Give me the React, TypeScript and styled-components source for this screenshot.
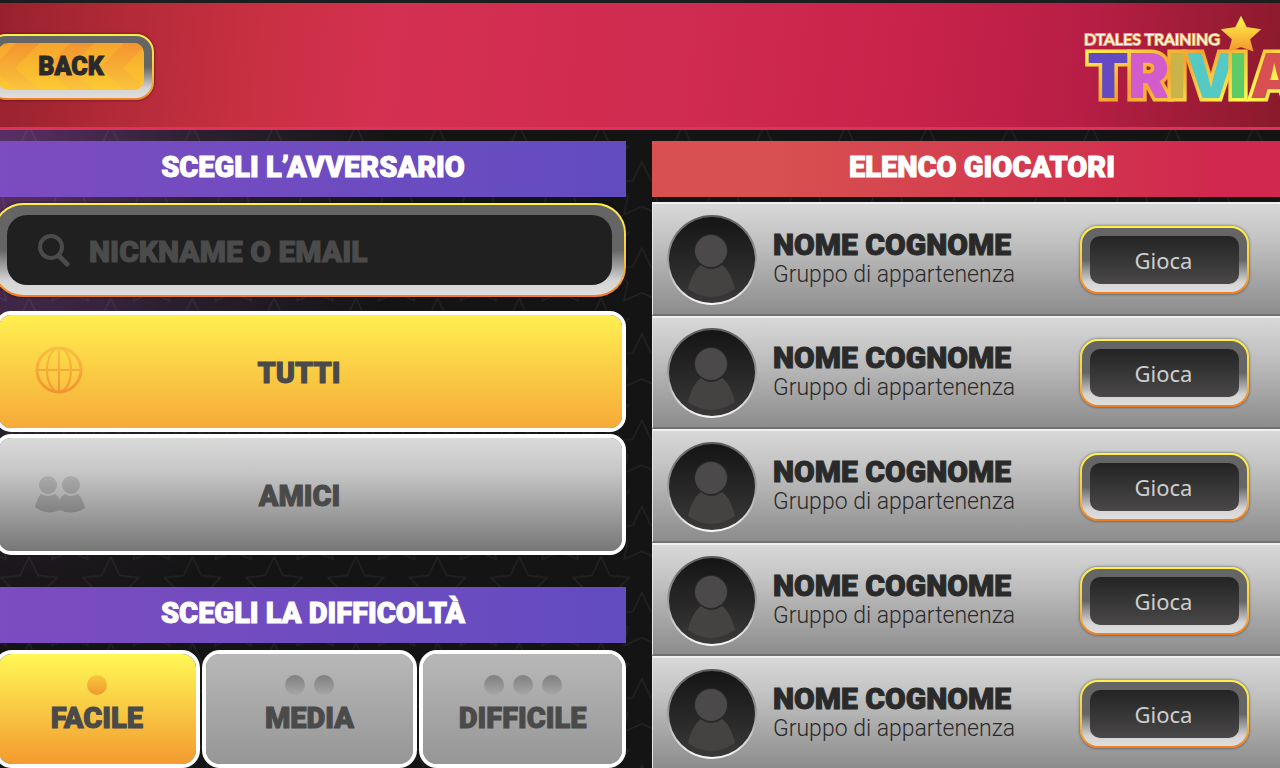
import React from "react";
import styled, { createGlobalStyle, css } from "styled-components";

const GlobalStyle = createGlobalStyle`
  * { box-sizing: border-box; }
  body { margin: 0; background: #141414; font-family: Roboto, "Liberation Sans", sans-serif; }
  button, input { font-family: inherit; }
`;

const displayText = css`
  font-family: Roboto, "Liberation Sans", sans-serif;
  font-weight: 900;
  text-transform: uppercase;
  -webkit-text-stroke: 1px currentColor;
`;

const goldRing = "linear-gradient(#fff04a, #f9c53a 60%, #f07c22)";
const steelRing = "linear-gradient(#656565 0%, #656565 50%, #d4d4d4 84%, #dedede 100%)";

const frame = css`
  border: 2px solid transparent;
  background: ${steelRing} padding-box, ${goldRing} border-box;
  box-shadow: 0 0 3px rgba(0, 0, 0, 0.6);
`;

const Page = styled.div`
  position: relative;
  height: 100vh;
  overflow: hidden;
  background: radial-gradient(ellipse 400px 480px at 0 160px, #5c3068, #2c2030 50%, #141414);
`;

const Stars = styled.svg`
  position: absolute;
  inset: 0;
  width: 100%;
  height: 100%;
`;

const Content = styled.div`
  position: relative;
`;

const Header = styled.header`
  display: flex;
  justify-content: space-between;
  align-items: flex-start;
  height: 130px;
  overflow: hidden;
  border-top: 3px solid #1b1d1f;
  border-bottom: 3px solid #e2305a;
  background: linear-gradient(97deg, #98212e 0%, #b32a38 10%, #c83042 20%, #d43050 30%, #d02b50 52%, #c9234b 70%, #b81e45 84%, #8a1a2c 100%);
`;

const BackButton = styled.button`
  ${frame}
  width: 166px;
  height: 66px;
  margin: 31px 0 0 -12px;
  padding: 7px 8px 8px;
  border-radius: 18px;
  cursor: pointer;
`;

const BackFace = styled.span`
  position: relative;
  display: flex;
  align-items: center;
  justify-content: center;
  height: 100%;
  overflow: hidden;
  border-radius: 10px;
  background: linear-gradient(#f7a52c, #fcca33);
`;

const Chevrons = styled.svg`
  position: absolute;
  inset: 0;
  width: 100%;
  height: 100%;
`;

const BackLabel = styled.span`
  ${displayText}
  position: relative;
  font-size: 25px;
  line-height: 30px;
  color: #2a2a2a;
`;

const Logo = styled.svg`
  flex: none;
  width: 220px;
  height: 100px;
  margin: 7px -20px 0 0;
`;

const Columns = styled.main`
  display: grid;
  grid-template-columns: minmax(0, 626fr) minmax(0, 628fr);
  gap: 26px;
  padding-top: 11px;
`;

const Column = styled.section`
  display: flex;
  flex-direction: column;
`;

const Title = styled.h2<{ $tone: "violet" | "red" }>`
  ${displayText}
  margin: 0;
  font-size: 29px;
  line-height: 52px;
  padding: 0 0 4px ${(p) => (p.$tone === "red" ? 32 : 0)}px;
  text-align: center;
  color: #fff;
  background: ${(p) =>
    p.$tone === "violet"
      ? "linear-gradient(90deg, #7c4cc0, #624cc0)"
      : "linear-gradient(90deg, #d85050 20%, #d0284e 90%)"};
`;

const SearchFrame = styled.label`
  ${frame}
  display: block;
  height: 94px;
  margin: 6px 0 14px -7px;
  padding: 10px 12px;
  border-radius: 30px;
`;

const SearchBox = styled.span`
  display: flex;
  align-items: center;
  gap: 18px;
  height: 70px;
  padding: 2px 30px 0;
  border-radius: 20px;
  background: #202020;
`;

const SearchInput = styled.input`
  ${displayText}
  flex: 1;
  min-width: 0;
  height: 60px;
  padding: 0;
  border: 0;
  outline: 0;
  background: none;
  color: #cfcfcf;
  font-size: 30px;
  &::placeholder { color: #4b4b4b; opacity: 1; }
`;

const Choices = styled.div`
  display: grid;
  gap: 2px;
  margin: 0 0 32px -5px;
`;

const Choice = styled.button<{ $active?: boolean }>`
  display: flex;
  align-items: center;
  height: 121px;
  padding: 0 108px 0 36px;
  border: 4px solid #fff;
  border-radius: 16px;
  cursor: pointer;
  background: ${(p) =>
    p.$active ? "linear-gradient(#ffef50, #f6aa38)" : "linear-gradient(#dadada, #c6c6c6 30%, #777)"} padding-box;
`;

const ChoiceLabel = styled.span`
  ${displayText}
  flex: 1;
  padding-top: 2px;
  font-size: 29px;
  line-height: 36px;
  text-align: center;
  color: #4a4a4a;
`;

const Levels = styled.div`
  display: grid;
  grid-template-columns: 206fr 216fr 207fr;
  gap: 2px;
  margin: 7px 0 0 -6px;
`;

const Level = styled.button<{ $active?: boolean }>`
  display: flex;
  flex-direction: column;
  align-items: center;
  gap: 10px;
  height: 118px;
  padding: 21px 0 0;
  border: 4px solid #fff;
  border-radius: 18px;
  cursor: pointer;
  background: ${(p) =>
    p.$active ? "linear-gradient(#fff856, #f39a30)" : "linear-gradient(#b8b8b8, #969696)"} padding-box;
`;

const Dots = styled.span`
  display: flex;
  gap: 9px;
`;

const Dot = styled.span<{ $active?: boolean }>`
  width: 20px;
  height: 20px;
  border-radius: 50%;
  background: ${(p) => (p.$active ? "linear-gradient(#f8c83c, #f19830)" : "linear-gradient(#808080, #a6a6a6)")};
`;

const LevelLabel = styled.span`
  ${displayText}
  font-size: 29px;
  line-height: 26px;
  color: #4a4a4a;
`;

const Players = styled.ul`
  flex: 1;
  display: grid;
  grid-auto-rows: minmax(0, 1fr);
  list-style: none;
  margin: 5px 0 -2px;
  padding: 0;
`;

const Player = styled.li`
  display: flex;
  align-items: center;
  padding: 2px 31px 0 14px;
  border-top: 2px solid #f0f0f0;
  border-left: 1px solid #e8e8e8;
  border-bottom: 2px solid #707070;
  background: linear-gradient(#d8d8d8, #c4c4c4 30%, #8c8c8c);
`;

const Avatar = styled.svg`
  flex: none;
  width: 92px;
  height: 92px;
  margin-right: 14px;
`;

const Identity = styled.div`
  flex: 1;
  min-width: 0;
  padding-bottom: 2px;
  white-space: nowrap;
  color: #2a2a2a;
`;

const Name = styled.h3`
  ${displayText}
  margin: 0;
  font-size: 30px;
  line-height: 32px;
`;

const Group = styled.p`
  margin: 0;
  font-size: 23px;
  font-weight: 300;
  line-height: 28px;
`;

const PlayButton = styled.button`
  ${frame}
  width: 169px;
  height: 68px;
  padding: 8px;
  border-radius: 18px;
  cursor: pointer;
`;

const PlayFace = styled.span`
  display: block;
  height: 48px;
  padding-right: 2px;
  border-radius: 10px;
  background: linear-gradient(#242424, #4a4848);
  font-family: "Noto Sans", "Liberation Sans", sans-serif;
  font-size: 22px;
  line-height: 48px;
  color: #cdcdcd;
`;

const STAR = "M0 0L9 19L28 21L14 35L18 53L0 45L-18 53L-14 35L-28 21L-9 19Z";

function StarBackground() {
  return (
    <Stars aria-hidden="true">
      <defs>
        <pattern id="stars" x="-11.8" y="125.6" width="81.7" height="86.2" patternUnits="userSpaceOnUse">
          <g fill="none" stroke="#fff" strokeOpacity="0.07" strokeWidth="1.2">
            <path d={STAR} transform="translate(40.85 0)" />
            <path d={STAR} transform="translate(0 36)" />
            <path d={STAR} transform="translate(81.7 36)" />
            <path d={STAR} transform="translate(0 -50.2)" />
            <path d={STAR} transform="translate(81.7 -50.2)" />
          </g>
        </pattern>
      </defs>
      <rect width="100%" height="100%" fill="url(#stars)" />
    </Stars>
  );
}

const LETTERS = [
  { char: "T", x: 7, color: "#644ac2" },
  { char: "R", x: 48, color: "#d25ccb" },
  { char: "I", x: 88, color: "#c9b44a" },
  { char: "V", x: 106, color: "#55cac4" },
  { char: "I", x: 149, color: "#5fcb66" },
  { char: "A", x: 170, color: "#d95052" },
];

function TriviaLogo() {
  return (
    <Logo viewBox="0 0 220 100" role="img" aria-label="DTales Training Trivia">
      <defs>
        <linearGradient id="gold" x1="0" y1="0" x2="0" y2="1">
          <stop offset="0" stopColor="#fff34f" />
          <stop offset="0.5" stopColor="#fbc53c" />
          <stop offset="1" stopColor="#f39a2e" />
        </linearGradient>
        <linearGradient id="letterEdge" gradientUnits="userSpaceOnUse" x1="0" y1="38" x2="30" y2="92" spreadMethod="reflect">
          <stop offset="0" stopColor="#fff84f" />
          <stop offset="1" stopColor="#f5a22f" />
        </linearGradient>
      </defs>
      <text x="4" y="35" fontFamily="Lato, sans-serif" fontWeight="400" fontSize="16" fill="#fff" stroke="#f0a050" strokeWidth="2" paintOrder="stroke">
        DTALES TRAINING
      </text>
      <g fontFamily="Inter, sans-serif" fontWeight="900" fontSize="62" stroke="url(#letterEdge)" strokeWidth="7" paintOrder="stroke">
        {LETTERS.map((l) => (
          <text key={l.x} x={l.x} y="88" fill={l.color}>
            {l.char}
          </text>
        ))}
      </g>
      <path
        d="M161 8L166 18L179 20L169 29L172 40L161 36L150 40L153 29L143 20L156 18Z"
        fill="url(#gold)"
        stroke="url(#gold)"
        strokeWidth="2"
      />
    </Logo>
  );
}

function BackPattern() {
  return (
    <Chevrons viewBox="0 0 146 47" preserveAspectRatio="none" aria-hidden="true">
      <defs>
        <linearGradient id="band" x1="0" y1="0" x2="0" y2="1">
          <stop offset="0" stopColor="#f3942f" />
          <stop offset="1" stopColor="#fbc43c" />
        </linearGradient>
      </defs>
      {[17, 71, 125].map((x) => (
        <path key={x} d={`M${x} 25L${x + 25} 0H${x + 1}L${x - 23} 25L${x + 1} 47H${x + 25}Z`} fill="url(#band)" />
      ))}
    </Chevrons>
  );
}

function PlayerAvatar() {
  return (
    <Avatar viewBox="0 0 92 92" aria-hidden="true">
      <defs>
        <linearGradient id="rim" x1="0" y1="0" x2="0" y2="1">
          <stop offset="0" stopColor="#5a5a5a" />
          <stop offset="0.55" stopColor="#a4a4a4" />
          <stop offset="1" stopColor="#fafafa" />
        </linearGradient>
        <linearGradient id="disc" x1="0" y1="0" x2="0" y2="1">
          <stop offset="0" stopColor="#151515" />
          <stop offset="1" stopColor="#3a3838" />
        </linearGradient>
      </defs>
      <circle cx="45" cy="46" r="45" fill="url(#rim)" />
      <circle cx="45" cy="46" r="43" fill="url(#disc)" />
      <path d="M34 51Q44 59 55 51C62 56 66 66 68 75Q44 91 21 75C23 66 27 56 34 51Z" fill="#454242" />
      <circle cx="44" cy="37" r="17" fill="#2a2929" />
      <circle cx="44" cy="37" r="16" fill="#4b4949" />
    </Avatar>
  );
}

function SearchIcon() {
  return (
    <svg width="34" height="34" viewBox="0 0 34 34" fill="none" stroke="#4b4b4b" strokeLinecap="round" aria-hidden="true">
      <circle cx="14" cy="13" r="11" strokeWidth="4" />
      <path d="M22 22L30 30" strokeWidth="5" />
    </svg>
  );
}

function GlobeIcon() {
  return (
    <svg width="49" height="50" viewBox="0 0 49 50" fill="none" stroke="url(#globe)" strokeWidth="2" aria-hidden="true">
      <defs>
        <linearGradient id="globe" gradientUnits="userSpaceOnUse" x1="0" y1="0" x2="0" y2="48">
          <stop offset="0" stopColor="#f9c043" />
          <stop offset="1" stopColor="#f2902e" />
        </linearGradient>
      </defs>
      <circle cx="24" cy="23" r="22" strokeWidth="3" />
      <ellipse cx="24" cy="23" rx="12" ry="22" />
      <path d="M24 1V45M2 23H46" />
    </svg>
  );
}

function FriendsIcon() {
  return (
    <svg width="50" height="37" viewBox="0 0 50 37" fill="url(#friends)" aria-hidden="true">
      <defs>
        <linearGradient id="friends" gradientUnits="userSpaceOnUse" x1="0" y1="0" x2="0" y2="37">
          <stop offset="0" stopColor="#aaa" />
          <stop offset="1" stopColor="#808080" />
        </linearGradient>
      </defs>
      <circle cx="13" cy="9" r="9" />
      <circle cx="36" cy="9" r="9" />
      <path d="M6 18Q13 22 20 18Q23 20 25 24Q26 20 30 18Q36 22 43 18Q48 23 50 32Q37 40 25 34Q12 40 0 31Q2 22 6 18Z" />
    </svg>
  );
}

const LEVELS = [
  { label: "Facile", dots: 1 },
  { label: "Media", dots: 2 },
  { label: "Difficile", dots: 3 },
];

const PLAYERS = Array.from({ length: 5 }, (_, id) => ({ id, name: "Nome Cognome", group: "Gruppo di appartenenza" }));

export default function App() {
  return (
    <Page>
      <GlobalStyle />
      <StarBackground />
      <Content>
        <Header>
          <BackButton type="button">
            <BackFace>
              <BackPattern />
              <BackLabel>Back</BackLabel>
            </BackFace>
          </BackButton>
          <TriviaLogo />
        </Header>
        <Columns>
          <Column>
            <Title $tone="violet">Scegli l’avversario</Title>
            <SearchFrame>
              <SearchBox>
                <SearchIcon />
                <SearchInput type="text" placeholder="Nickname o email" aria-label="Nickname o email" />
              </SearchBox>
            </SearchFrame>
            <Choices>
              <Choice type="button" $active>
                <GlobeIcon />
                <ChoiceLabel>Tutti</ChoiceLabel>
              </Choice>
              <Choice type="button">
                <FriendsIcon />
                <ChoiceLabel>Amici</ChoiceLabel>
              </Choice>
            </Choices>
            <Title $tone="violet">Scegli la difficoltà</Title>
            <Levels>
              {LEVELS.map((level, i) => (
                <Level key={level.label} type="button" $active={i === 0}>
                  <Dots>
                    {Array.from({ length: level.dots }, (_, d) => (
                      <Dot key={d} $active={i === 0} />
                    ))}
                  </Dots>
                  <LevelLabel>{level.label}</LevelLabel>
                </Level>
              ))}
            </Levels>
          </Column>
          <Column>
            <Title $tone="red">Elenco giocatori</Title>
            <Players>
              {PLAYERS.map((player) => (
                <Player key={player.id}>
                  <PlayerAvatar />
                  <Identity>
                    <Name>{player.name}</Name>
                    <Group>{player.group}</Group>
                  </Identity>
                  <PlayButton type="button">
                    <PlayFace>Gioca</PlayFace>
                  </PlayButton>
                </Player>
              ))}
            </Players>
          </Column>
        </Columns>
      </Content>
    </Page>
  );
}
